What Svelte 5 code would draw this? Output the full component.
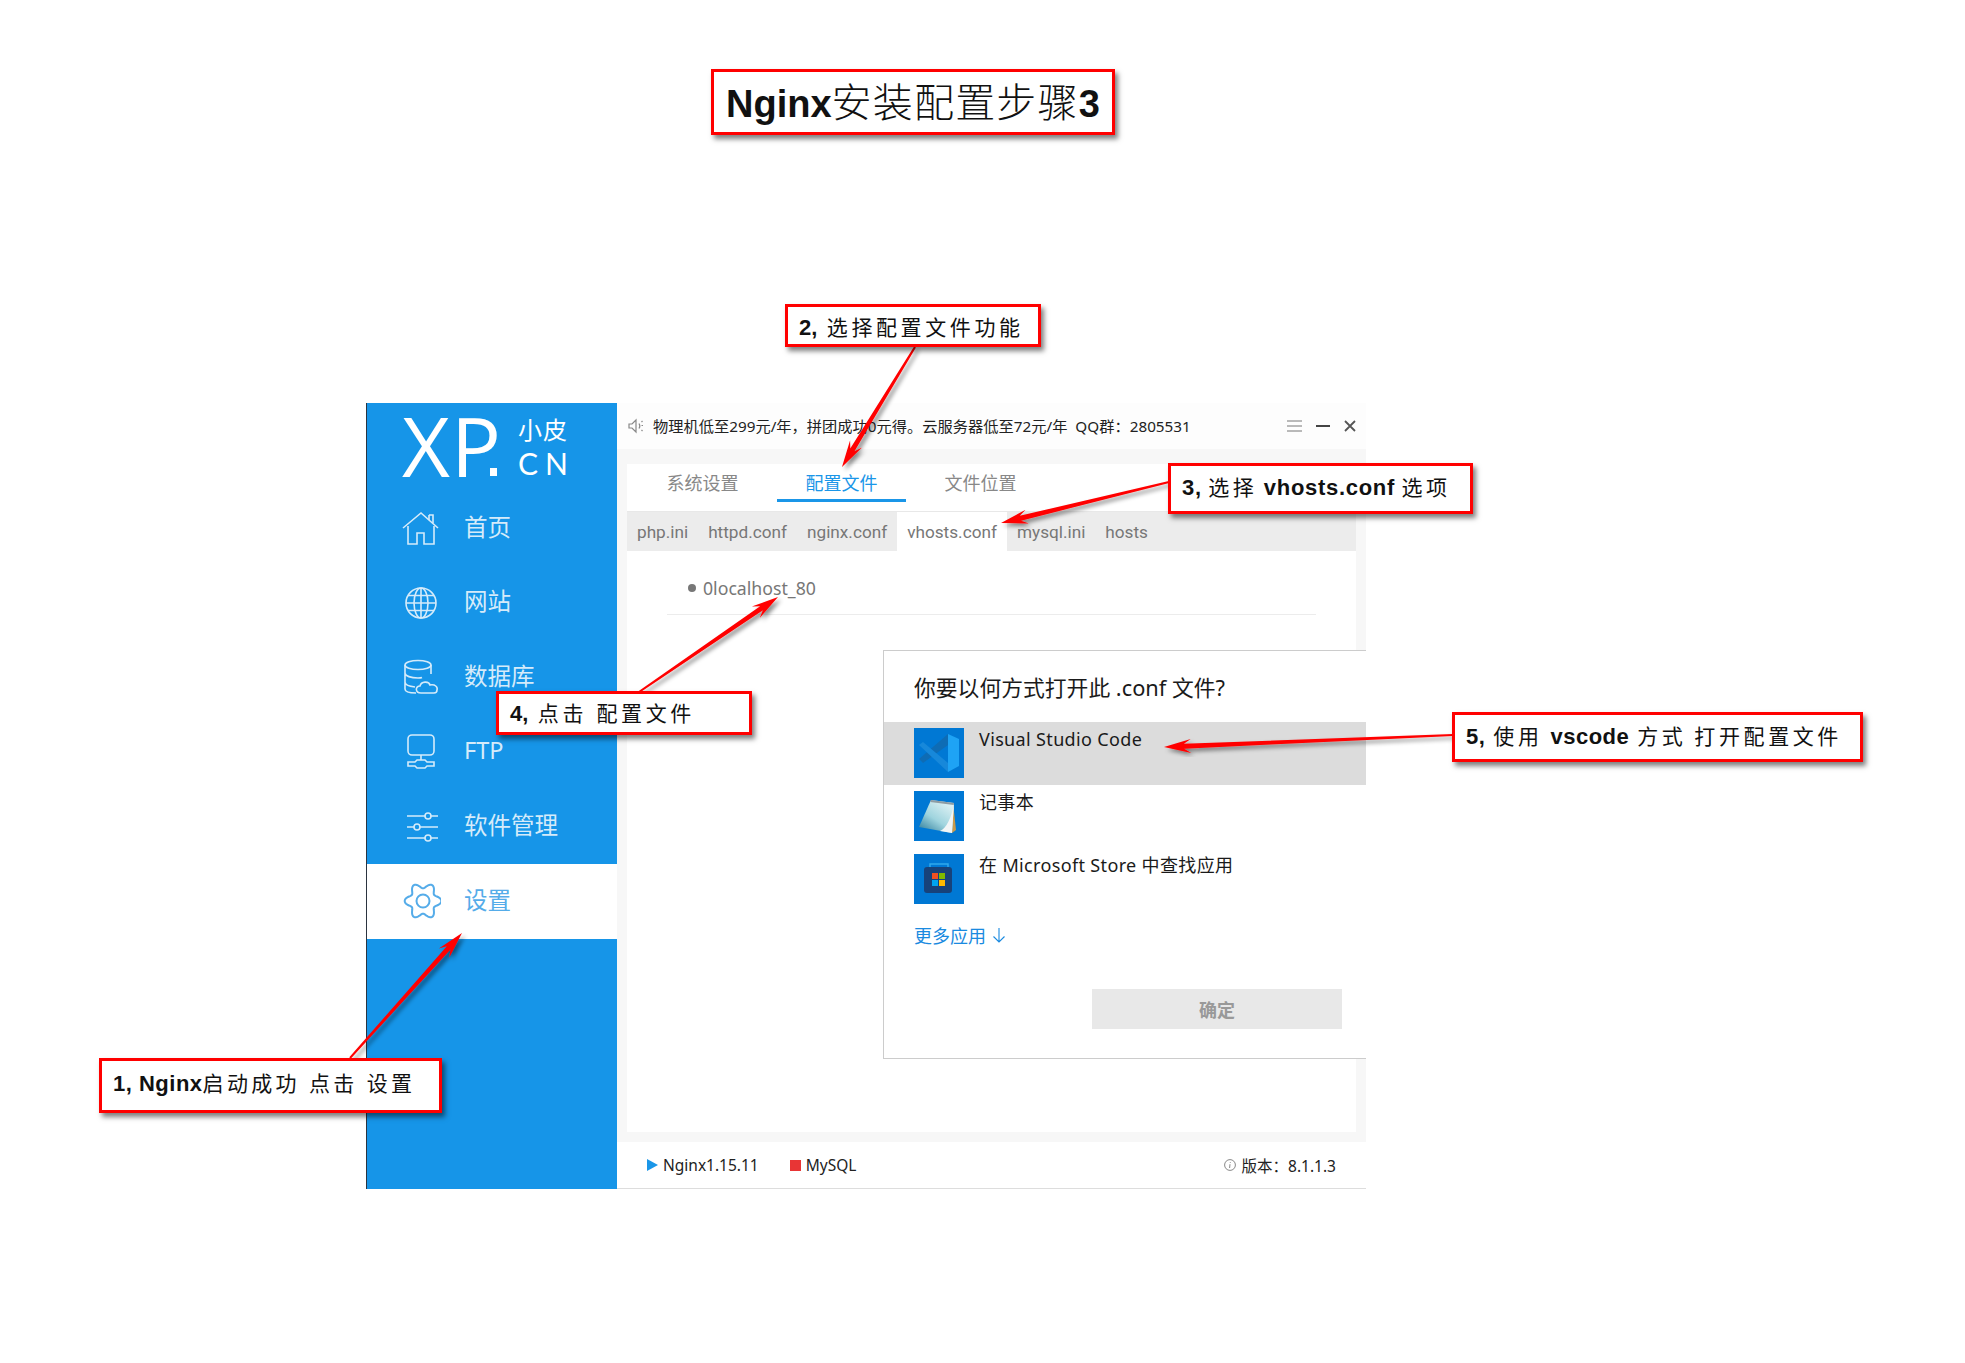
<script>
  // Annotated screenshot: app window with red callouts and arrows on top

  const navItems = [
    { label: '首页', icon: 'home' },
    { label: '网站', icon: 'globe' },
    { label: '数据库', icon: 'db' },
    { label: 'FTP', icon: 'ftp' },
    { label: '软件管理', icon: 'sliders' },
    { label: '设置', icon: 'gear', active: true }
  ]

  const tabs = [
    { label: '系统设置' },
    { label: '配置文件', active: true },
    { label: '文件位置' }
  ]

  const confTabs = ['php.ini', 'httpd.conf', 'nginx.conf', 'vhosts.conf', 'mysql.ini', 'hosts']

  // tail -> tip, in page pixels
  const arrows = [
    { from: [350, 1058], to: [462, 933] },
    { from: [915, 347], to: [842, 467] },
    { from: [1169, 482], to: [1001, 523] },
    { from: [639, 692], to: [778, 597] },
    { from: [1453, 735], to: [1164, 747] }
  ]

  function arrowPoints({ from, to }) {
    const dx = to[0] - from[0]
    const dy = to[1] - from[1]
    const len = Math.hypot(dx, dy)
    const ux = dx / len
    const uy = dy / len
    const at = (along, side) =>
      `${(from[0] + ux * along - uy * side).toFixed(1)},${(from[1] + uy * along + ux * side).toFixed(1)}`
    return [
      at(0, -1), at(len - 20, -2.5), at(len - 27, -7), at(len, 0),
      at(len - 27, 7), at(len - 20, 2.5), at(0, 1)
    ].join(' ')
  }

  // six rounded lobes round the settings icon
  const gearPoints = Array.from({ length: 120 }, (_, i) => {
    const a = (i / 120) * Math.PI * 2
    const r = 15.5 + 2.8 * Math.cos(6 * a)
    return `${(22 + r * Math.cos(a)).toFixed(2)},${(20 + r * Math.sin(a)).toFixed(2)}`
  }).join(' ')
</script>

<div class="page">
  <div class="window">
    <aside class="sidebar">
      <div class="logo">
        <span class="logo-xp">XP</span>
        <span class="logo-side">
          <span class="logo-cn">小皮</span>
          <span class="logo-en">CN</span>
        </span>
      </div>
      {#each navItems as item}
        <div class="nav-item" class:active={item.active}>
          <svg class="nav-icon" viewBox="0 0 40 40" fill="none" stroke="currentColor" stroke-width="1.6">
            {#if item.icon === 'home'}
              <path d="M2 20 20 5l17 15" />
              <path d="M28 7v5M28 7h4v8" />
              <path d="M7 18v18h9V25h7v11h10V18" />
            {:else if item.icon === 'globe'}
              <circle cx="20" cy="20" r="15" />
              <ellipse cx="20" cy="20" rx="7" ry="15" />
              <path d="M20 5v30M5 20h30M7 12.5h26M7 27.5h26" />
            {:else if item.icon === 'db'}
              <ellipse cx="17" cy="8" rx="13" ry="4.5" />
              <path d="M4 8v24c0 2 3 4 11 4M30 8v9M4 16c0 3 6 5 13 5 2 0 3 0 4-.5M4 25c0 3 5 4.500 10 5" />
              <path d="M20 36c-6 0-6-7-1-7 1-5 9-5 10-1 5-1 8 2 7 5 0 2-1 3-3 3z" />
            {:else if item.icon === 'ftp'}
              <rect x="7" y="3" width="26" height="20" rx="4" />
              <path d="M20 23v5" />
              <path d="M7 30h7l2-2h8l2 2h7v4h-7l-2 2h-8l-2-2H7z" />
            {:else if item.icon === 'sliders'}
              <path d="M6 9h18M30 9h7M6 20h7M19 20h18M6 31h18M30 31h7" />
              <circle cx="27" cy="9" r="3" />
              <circle cx="16" cy="20" r="3" />
              <circle cx="27" cy="31" r="3" />
            {:else}
              <polygon points={gearPoints} stroke-width="2" />
              <circle cx="22" cy="20" r="6.500" stroke-width="2" />
            {/if}
          </svg>
          <span class="nav-label">{item.label}</span>
        </div>
      {/each}
    </aside>

    <main class="main">
      <header class="notice">
        <svg class="speaker" viewBox="0 0 16 16" fill="none" stroke="#888" stroke-width="1.200">
          <path d="M1 6h3l4-4v12l-4-4H1zM11 5.500c1 1.500 1 3.500 0 5M13.500 7.500h1.500M13.500 4l1-1M13.500 12l1 1" />
        </svg>
        <span class="notice-text">物理机低至299元/年，拼团成功0元得。云服务器低至72元/年&nbsp;&nbsp;QQ群：2805531</span>
        <span class="win-btns">
          <svg width="15" height="12" viewBox="0 0 15 12" stroke="#777" stroke-width="1"><path d="M0 1h15M0 6h15M0 11h15" /></svg>
          <svg width="14" height="12" viewBox="0 0 14 12" stroke="#444" stroke-width="2"><path d="M0 6h14" /></svg>
          <svg width="12" height="12" viewBox="0 0 12 12" stroke="#555" stroke-width="1.800"><path d="M1 1l10 10M11 1 1 11" /></svg>
        </span>
      </header>

      <section class="body">
        <div class="panel">
          <nav class="tabs">
            {#each tabs as tab}
              <span class="tab" class:active={tab.active}>{tab.label}</span>
            {/each}
          </nav>
          <nav class="conf-tabs">
            {#each confTabs as name}
              <span class="conf-tab" class:active={name === 'vhosts.conf'}>{name}</span>
            {/each}
          </nav>
          <div class="site-row"><i class="dot"></i>0localhost_80</div>
        </div>
      </section>

      <footer class="status">
        <span class="run"></span><span class="status-label">Nginx1.15.11</span>
        <span class="stop"></span><span class="status-label">MySQL</span>
        <span class="version">
          <svg width="12" height="12" viewBox="0 0 12 12" fill="none" stroke="#888"><circle cx="6" cy="6" r="5.400" /><path d="M6.300 3v.8M6 5.200 5.600 9" /></svg>
          版本：8.1.1.3
        </span>
      </footer>
    </main>

    <div class="dialog">
      <h2 class="dialog-title">你要以何方式打开此 .conf 文件?</h2>
      <div class="app-row selected">
        <svg class="app-icon" viewBox="0 0 50 50">
          <rect width="50" height="50" fill="#0078d4" />
          <path d="M5 31l4 4L34 17V6z" fill="#0e6cb5" />
          <path d="M5 17l4-3 25 21v9z" fill="#1788da" />
          <path d="M34 6l11 5v27l-11 6z" fill="#1ea3f5" />
        </svg>
        <span>Visual Studio Code</span>
      </div>
      <div class="app-row">
        <svg class="app-icon" viewBox="0 0 50 50">
          <defs>
            <linearGradient id="pad" x1="0.8" y1="0" x2="0.1" y2="1">
              <stop offset="0" stop-color="#e4f4f6" />
              <stop offset="0.55" stop-color="#9fd4de" />
              <stop offset="1" stop-color="#2f7e9c" />
            </linearGradient>
          </defs>
          <rect width="50" height="50" fill="#0078d4" />
          <path d="M39 12l3 27-4 3z" fill="#c99a4a" />
          <path d="M17 9l23 3-2 30L5 36z" fill="url(#pad)" />
          <path d="M40 12l-2 30-12-2c6-2 12-14 14-28z" fill="#f2f5f6" />
          <path d="M17 9l23 3-.3 2-23.500-3z" fill="#8e9ca3" />
        </svg>
        <span>记事本</span>
      </div>
      <div class="app-row">
        <svg class="app-icon" viewBox="0 0 50 50">
          <rect width="50" height="50" fill="#0078d4" />
          <path d="M16 14v-4h18v4" fill="none" stroke="#2fa8ec" stroke-width="1.500" />
          <rect x="10" y="13" width="28" height="26" rx="3" fill="#17427a" />
          <rect x="18" y="19" width="6" height="6" fill="#f25022" />
          <rect x="25" y="19" width="6" height="6" fill="#7fba00" />
          <rect x="18" y="26" width="6" height="6" fill="#00a4ef" />
          <rect x="25" y="26" width="6" height="6" fill="#ffb900" />
        </svg>
        <span>在 Microsoft Store 中查找应用</span>
      </div>
      <div class="more">更多应用 <svg width="14" height="16" viewBox="0 0 14 16" fill="none" stroke="#1a8ae0" stroke-width="1.100"><path d="M7 1v14M1.500 9.500 7 15l5.500-5.500" /></svg></div>
      <button class="ok">确定</button>
    </div>
  </div>

  <svg class="arrows" width="1965" height="1363">
    <defs>
      <filter id="arrow-shadow" x="-20%" y="-20%" width="140%" height="140%">
        <feDropShadow dx="3" dy="3" stdDeviation="2" flood-color="#000" flood-opacity="0.45" />
      </filter>
    </defs>
    {#each arrows as arrow}
      <polygon points={arrowPoints(arrow)} fill="#f00" filter="url(#arrow-shadow)" />
    {/each}
  </svg>

  <div class="callout title-box"><span><b>Nginx</b><em>安装配置步骤</em><b>3</b></span></div>
  <div class="callout c1"><span><b>1, Nginx</b>启动成功 点击 设置</span></div>
  <div class="callout c2"><span><b>2,</b> 选择配置文件功能</span></div>
  <div class="callout c3"><span><b>3,</b> 选择 <b>vhosts.conf</b> 选项</span></div>
  <div class="callout c4"><span><b>4,</b> 点击 配置文件</span></div>
  <div class="callout c5"><span><b>5,</b> 使用 <b>vscode</b> 方式 打开配置文件</span></div>
</div>

<style>
  :global(body) {
    margin: 0;
    background: #fff;
  }

  .page {
    position: relative;
    width: 1965px;
    height: 1363px;
    overflow: hidden;
    font-family: 'Noto Sans', 'Noto Sans CJK SC', sans-serif;
  }

  .window {
    position: absolute;
    left: 366px;
    top: 403px;
    width: 1000px;
    height: 786px;
    display: flex;
  }

  .sidebar {
    width: 251px;
    flex: none;
    box-sizing: border-box;
    background: #1695e8;
    border-left: 1px solid #2b3440;
    color: #d5ebfa;
  }

  .logo {
    height: 88px;
    display: flex;
    align-items: flex-start;
    color: #fff;
    padding-left: 35px;
  }

  .logo-xp {
    position: relative;
    font-family: 'Open Sans', sans-serif;
    font-weight: 400;
    font-size: 83px;
    line-height: 84px;
    width: 116px;
    letter-spacing: 1px;
  }

  /* square dot tucked under the bowl of the P */
  .logo-xp::after {
    content: '';
    position: absolute;
    left: 88px;
    top: 65px;
    width: 7px;
    height: 8px;
    background: #fff;
  }

  .logo-side {
    display: flex;
    flex-direction: column;
    padding-top: 11px;
  }

  .logo-cn {
    font-size: 24px;
    line-height: 32px;
    letter-spacing: 1px;
  }

  .logo-en {
    font-family: 'Lato', sans-serif;
    font-size: 30px;
    line-height: 35px;
    letter-spacing: 7px;
  }

  .nav-item {
    height: 74.6px;
    display: flex;
    align-items: center;
    padding-left: 34px;
    gap: 23px;
    font-size: 23.500px;
  }

  .nav-item.active {
    background: #fff;
    color: #55ace9;
  }

  .nav-label {
    padding-bottom: 5px;
  }

  .nav-icon {
    width: 40px;
    height: 40px;
    flex: none;
  }

  .main {
    flex: 1;
    display: flex;
    flex-direction: column;
    min-width: 0;
  }

  .notice {
    height: 46px;
    flex: none;
    display: flex;
    align-items: center;
    background: #fdfdfd;
    padding-left: 11px;
    padding-right: 10px;
    font-size: 15.250px;
    color: #222;
  }

  .notice-text {
    padding-bottom: 2px;
  }

  .speaker {
    width: 16px;
    height: 16px;
    margin-right: 9px;
  }

  .win-btns {
    margin-left: auto;
    display: flex;
    align-items: center;
    gap: 14px;
  }

  .body {
    flex: 1;
    background: #f7f7f7;
    padding: 15px 10px 10px;
    min-height: 0;
    display: flex;
  }

  .panel {
    flex: 1;
    background: #fff;
    display: flex;
    flex-direction: column;
  }

  .tabs {
    height: 47px;
    display: flex;
    padding-left: 11px;
    border-bottom: 1px solid #e8e8e8;
  }

  .tab {
    width: 129px;
    height: 35px;
    margin-right: 10px;
    display: flex;
    align-items: center;
    justify-content: center;
    font-size: 18px;
    color: #888;
  }

  .tab.active {
    color: #1a96e8;
    border-bottom: 3px solid #1a96e8;
  }

  .conf-tabs {
    height: 39px;
    display: flex;
    background: #ececec;
  }

  .conf-tab {
    padding: 0 10px;
    display: flex;
    align-items: center;
    font-family: 'Roboto', sans-serif;
    font-size: 17.200px;
    color: #777;
  }

  .conf-tab.active {
    background: #fff;
  }

  .site-row {
    height: 64px;
    margin: 0 40px;
    padding-left: 21px;
    padding-top: 10px;
    box-sizing: border-box;
    display: flex;
    align-items: center;
    border-bottom: 1px solid #ececec;
    font-size: 17.700px;
    color: #777;
  }

  .dot {
    width: 8px;
    height: 8px;
    border-radius: 50%;
    background: #777;
    margin-right: 7px;
  }

  .status {
    height: 47px;
    flex: none;
    box-sizing: border-box;
    display: flex;
    align-items: center;
    background: #fff;
    border-bottom: 1px solid #ddd;
    padding-left: 30px;
    padding-right: 30px;
    font-size: 15.500px;
    color: #222;
  }

  .run {
    width: 0;
    height: 0;
    border-left: 11px solid #1a96e8;
    border-top: 6px solid transparent;
    border-bottom: 6px solid transparent;
    margin-right: 5px;
  }

  .stop {
    width: 11px;
    height: 11px;
    background: #e83535;
    margin-left: 31px;
    margin-right: 5px;
  }

  .version {
    margin-left: auto;
    display: flex;
    align-items: center;
    gap: 6px;
  }

  .dialog {
    position: absolute;
    left: 517px;
    top: 247px;
    right: 0;
    height: 409px;
    box-sizing: border-box;
    background: #fff;
    border: 1px solid #ccc;
    border-right: none;
    display: flex;
    flex-direction: column;
    color: #1a1a1a;
  }

  .dialog-title {
    margin: 0;
    height: 71px;
    padding-left: 30px;
    display: flex;
    align-items: center;
    font-size: 21.800px;
    font-weight: 400;
  }

  .app-row {
    height: 63px;
    flex: none;
    display: flex;
    padding-left: 30px;
    gap: 15px;
    font-size: 18px;
    line-height: 24px;
    letter-spacing: 0.350px;
  }

  .app-row.selected {
    background: #dcdcdc;
  }

  .app-row span {
    padding-top: 5px;
  }

  .app-icon {
    width: 50px;
    height: 50px;
    margin-top: 6px;
    flex: none;
  }

  .more {
    margin: 12px 0 42px 30px;
    height: 24px;
    display: flex;
    align-items: center;
    gap: 6px;
    font-size: 18px;
    color: #1a8ae0;
  }

  .ok {
    align-self: flex-end;
    margin-right: 24px;
    width: 250px;
    height: 40px;
    border: none;
    background: #e8e8e8;
    color: #999;
    font-family: inherit;
    font-size: 18px;
    font-weight: 700;
  }

  .arrows {
    position: absolute;
    left: 0;
    top: 0;
    pointer-events: none;
  }

  .callout {
    position: absolute;
    box-sizing: border-box;
    display: flex;
    align-items: center;
    white-space: pre;
    background: #fff;
    border: 3px solid #f00;
    box-shadow: 3px 4px 5px rgba(0, 0, 0, 0.5);
    color: #111;
    font-family: 'Liberation Sans', 'Noto Sans CJK SC', sans-serif;
    font-size: 21px;
    letter-spacing: 3.600px;
    padding-left: 11px;
  }

  .callout b {
    letter-spacing: 0;
    font-size: 22px;
  }

  .title-box {
    left: 711px;
    top: 69px;
    width: 404px;
    height: 66px;
    font-size: 40px;
    letter-spacing: 0;
    padding-left: 12px;
    padding-bottom: 4px;
  }

  .title-box b {
    font-size: 38px;
  }

  .title-box em {
    font-style: normal;
    letter-spacing: 1.200px;
    font-weight: 300;
  }

  .c1 {
    left: 99px;
    top: 1058px;
    width: 343px;
    height: 55px;
    padding-bottom: 8px;
    letter-spacing: 3.300px;
  }

  .c1 b {
    letter-spacing: 0.500px;
  }

  .c2 {
    left: 785px;
    top: 304px;
    width: 256px;
    height: 43px;
  }

  .c3 {
    left: 1168px;
    top: 463px;
    width: 305px;
    height: 51px;
    word-spacing: -3px;
    padding-bottom: 6px;
  }

  .c3 b {
    letter-spacing: 0.700px;
  }

  .c4 {
    left: 496px;
    top: 691px;
    width: 256px;
    height: 44px;
    padding-bottom: 2px;
  }

  .c5 {
    left: 1452px;
    top: 712px;
    width: 411px;
    height: 50px;
    word-spacing: -1.500px;
    padding-bottom: 5px;
  }

  .c5 b {
    letter-spacing: 0.500px;
  }
</style>
